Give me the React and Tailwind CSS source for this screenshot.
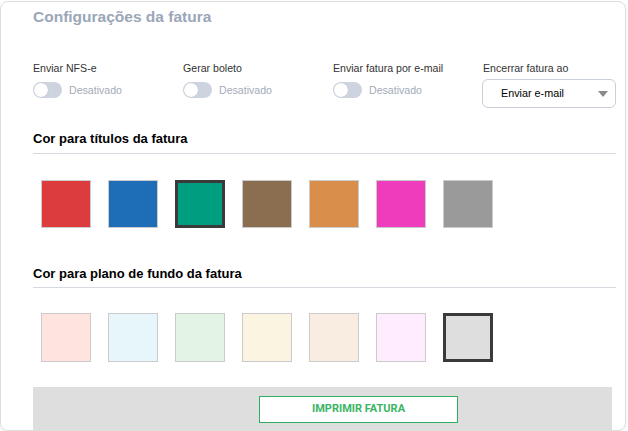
import React from 'react';

const titleColors = ['#dc3c3e', '#1e6db7', '#009e80', '#8b6d4f', '#d98f4b', '#ef3cbd', '#9a9a9a'];
const bgColors = ['#ffe3df', '#e6f6fb', '#e3f3e5', '#fbf4e1', '#f9ede2', '#ffecfe', '#dedede'];

const Toggle = ({ label }) => (
  <div className="flex flex-col w-[150px]">
    <span className="text-[10.6px] leading-[14px] text-[#333]">{label}</span>
    <div className="flex items-center gap-[7px] mt-[7px]">
      <div className="w-[29px] h-[16px] rounded-full bg-[#cdd4df] relative">
        <div className="absolute left-[1px] top-[1px] w-[14px] h-[14px] rounded-full bg-white shadow-[0_0_1px_rgba(0,0,0,0.2)]" />
      </div>
      <span className="text-[10.6px] leading-[14px] text-[#a3abb8]">Desativado</span>
    </div>
  </div>
);

const Swatches = ({ colors, selected, height }) => (
  <div className="flex gap-[17px] pl-2">
    {colors.map((c, i) => (
      <div
        key={c}
        className={
          'w-[50px] ' + height + ' ' +
          (i === selected ? 'border-[3px] border-[#3a3a3a]' : 'border border-[#cbcbcb]')
        }
        style={{ backgroundColor: c }}
      />
    ))}
  </div>
);

export default function App() {
  return (
    <div className="w-[628px] h-[431px] bg-white overflow-hidden font-['Liberation_Sans',Arial,sans-serif]">
      <div className="mt-px w-[626px] h-[430px] border border-[#dedede] rounded-[8px] shadow-[0_1px_3px_rgba(0,0,0,0.08)] pl-[32px] pr-[9px] pt-[5px] overflow-hidden">
        <h1 className="text-[15.5px] leading-[20px] font-bold text-[#9ba6b8]">Configurações da fatura</h1>

        <div className="flex mt-[34px]">
          <Toggle label="Enviar NFS-e" />
          <Toggle label="Gerar boleto" />
          <Toggle label="Enviar fatura por e-mail" />
          <div className="flex flex-col flex-1">
            <span className="text-[10.6px] leading-[14px] text-[#333]">Encerrar fatura ao</span>
            <div className="mt-1 h-[29px] border border-[#c9cfd8] rounded-[6px] flex items-center justify-between pl-[18px] pr-[7px] -ml-px">
              <span className="text-[10.8px] text-black">Enviar e-mail</span>
              <svg width="10" height="6" viewBox="0 0 10 6">
                <path d="M0 0 L10 0 L5 6 Z" fill="#8a8a8a" />
              </svg>
            </div>
          </div>
        </div>

        <h2 className="mt-[23px] text-[13px] leading-[16px] font-bold text-black pb-[6px] border-b border-[#d5d9e0]">
          Cor para títulos da fatura
        </h2>
        <div className="mt-[26px]">
          <Swatches colors={titleColors} selected={2} height="h-[48px]" />
        </div>

        <h2 className="mt-[38px] text-[13px] leading-[16px] font-bold text-black pb-[5px] border-b border-[#d5d9e0]">
          Cor para plano de fundo da fatura
        </h2>
        <div className="mt-[25px]">
          <Swatches colors={bgColors} selected={6} height="h-[49px]" />
        </div>

        <div className="mt-[25px] w-[579px] h-[60px] bg-[#dedede] pt-[9px]">
          <div className="ml-[226px] w-[199px] h-[27px] bg-white border border-[#2fae62] text-[#3bb565] text-[11px] font-bold font-['Roboto',sans-serif] flex items-center justify-center">
            IMPRIMIR FATURA
          </div>
        </div>
      </div>
    </div>
  );
}
